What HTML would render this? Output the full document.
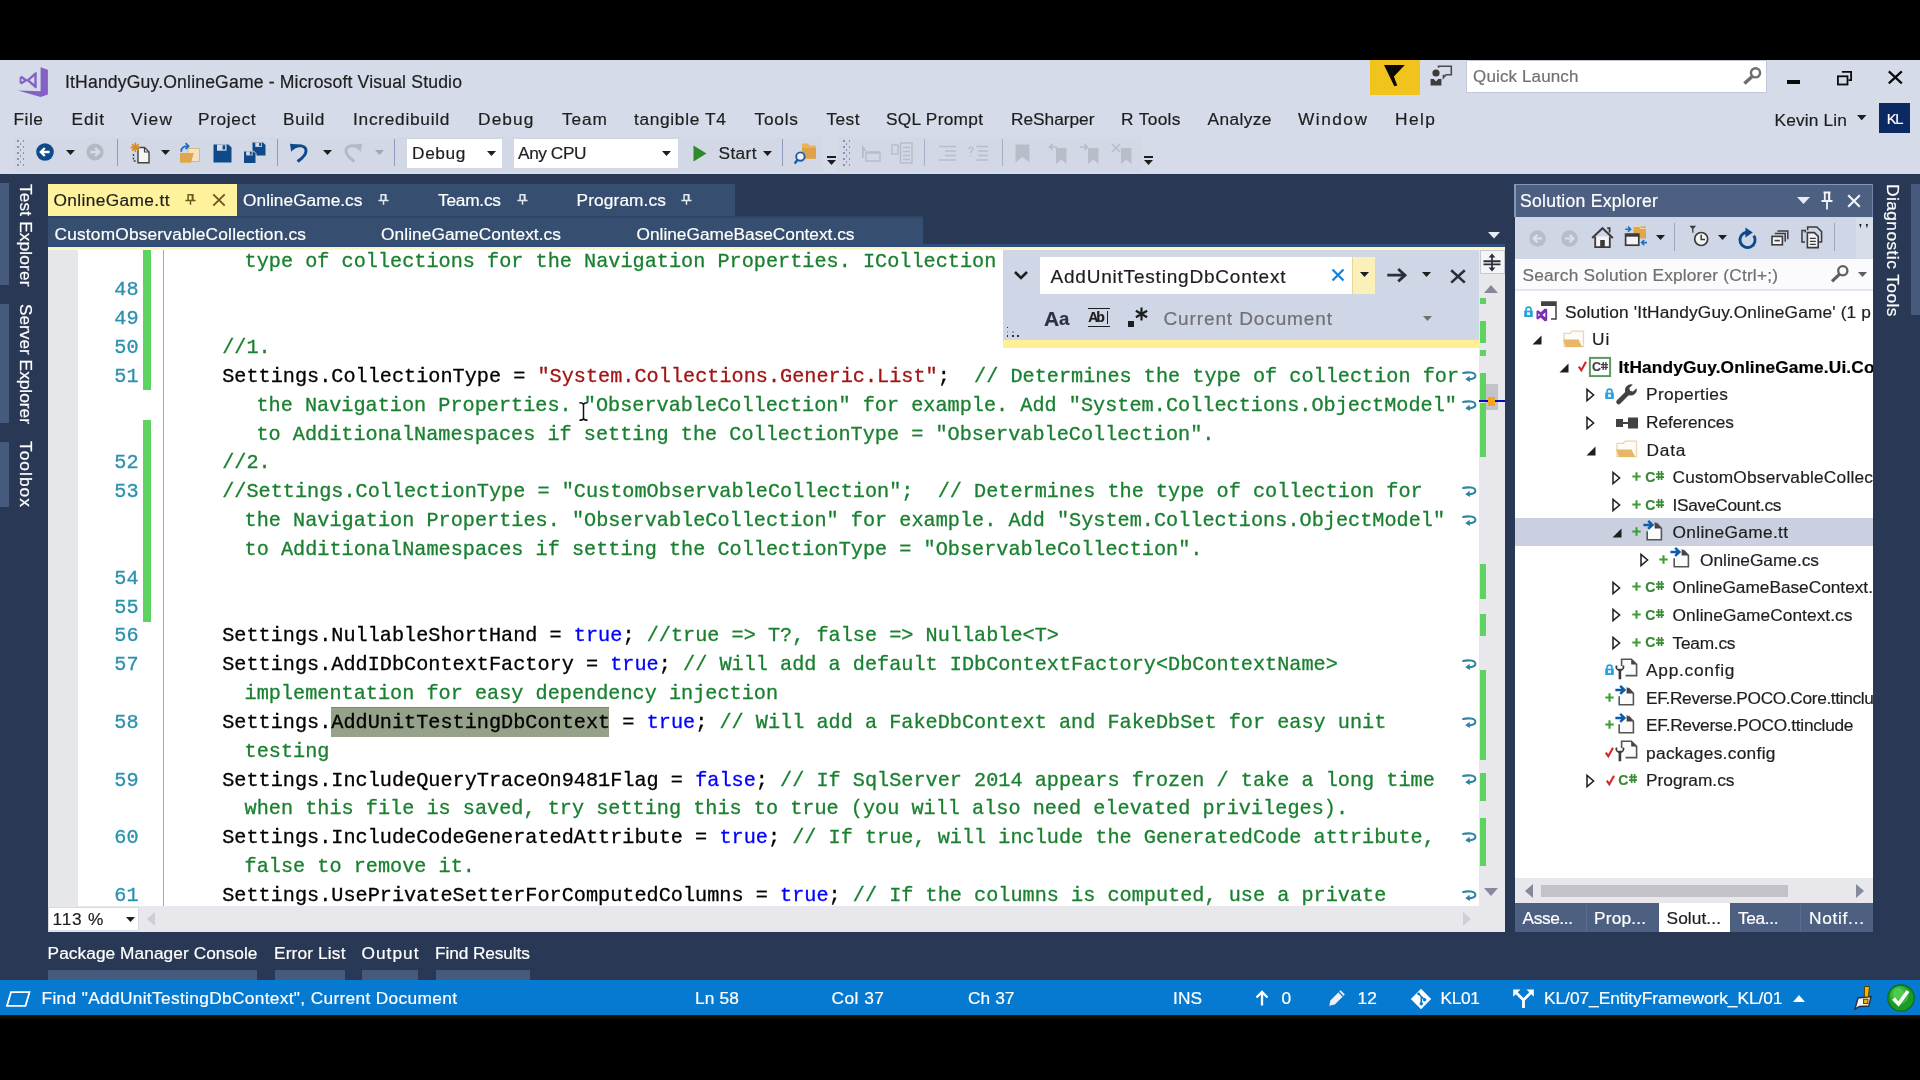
<!DOCTYPE html>
<html><head><meta charset="utf-8"><title>ItHandyGuy.OnlineGame - Microsoft Visual Studio</title>
<style>
html,body{margin:0;padding:0;width:1920px;height:1080px;overflow:hidden;background:#000;}
#root{position:relative;width:1920px;height:1080px;overflow:hidden;background:#000;}
#root div,#root span,#root svg{position:absolute;}
#root svg{overflow:visible;}
.fs{font-family:"Liberation Sans", sans-serif;white-space:pre;-webkit-text-stroke:0.2px;}
.fm{font-family:"Liberation Mono", monospace;white-space:pre;}
.cl{font-family:"Liberation Mono", monospace;font-size:20.2px;line-height:28.83px;height:28.83px;white-space:pre;letter-spacing:0.012px;-webkit-text-stroke:0.3px;}#root{filter:blur(0.45px);}
</style></head><body><div id="root">
<div style="left:0px;top:60px;width:1920px;height:955px;background:#293955;"></div>
<div style="left:0px;top:60px;width:1920px;height:114px;background:#d6dbe9;"></div>
<span class="fs" style="left:65.03px;top:71.5px;font-size:17.6px;line-height:21px;color:#1e1e1e;letter-spacing:0.161px;">ItHandyGuy.OnlineGame - Microsoft Visual Studio</span>
<span class="fs" style="left:13.55px;top:108.7px;font-size:17.3px;line-height:21px;color:#1e1e1e;letter-spacing:0.514px;">File</span>
<span class="fs" style="left:71.55px;top:108.7px;font-size:17.3px;line-height:21px;color:#1e1e1e;letter-spacing:0.873px;">Edit</span>
<span class="fs" style="left:131.05px;top:108.7px;font-size:17.3px;line-height:21px;color:#1e1e1e;letter-spacing:1.248px;">View</span>
<span class="fs" style="left:198.05px;top:108.7px;font-size:17.3px;line-height:21px;color:#1e1e1e;letter-spacing:0.601px;">Project</span>
<span class="fs" style="left:283.05px;top:108.7px;font-size:17.3px;line-height:21px;color:#1e1e1e;letter-spacing:0.741px;">Build</span>
<span class="fs" style="left:353.05px;top:108.7px;font-size:17.3px;line-height:21px;color:#1e1e1e;letter-spacing:0.728px;">Incredibuild</span>
<span class="fs" style="left:478.05px;top:108.7px;font-size:17.3px;line-height:21px;color:#1e1e1e;letter-spacing:1.116px;">Debug</span>
<span class="fs" style="left:562.05px;top:108.7px;font-size:17.3px;line-height:21px;color:#1e1e1e;letter-spacing:0.879px;">Team</span>
<span class="fs" style="left:634.05px;top:108.7px;font-size:17.3px;line-height:21px;color:#1e1e1e;letter-spacing:0.67px;">tangible T4</span>
<span class="fs" style="left:754.55px;top:108.7px;font-size:17.3px;line-height:21px;color:#1e1e1e;letter-spacing:0.764px;">Tools</span>
<span class="fs" style="left:826.55px;top:108.7px;font-size:17.3px;line-height:21px;color:#1e1e1e;letter-spacing:0.399px;">Test</span>
<span class="fs" style="left:886.05px;top:108.7px;font-size:17.3px;line-height:21px;color:#1e1e1e;letter-spacing:0.272px;">SQL Prompt</span>
<span class="fs" style="left:1011.05px;top:108.7px;font-size:17.3px;line-height:21px;color:#1e1e1e;letter-spacing:-0.022px;">ReSharper</span>
<span class="fs" style="left:1121.05px;top:108.7px;font-size:17.3px;line-height:21px;color:#1e1e1e;letter-spacing:0.348px;">R Tools</span>
<span class="fs" style="left:1207.55px;top:108.7px;font-size:17.3px;line-height:21px;color:#1e1e1e;letter-spacing:0.403px;">Analyze</span>
<span class="fs" style="left:1298.05px;top:108.7px;font-size:17.3px;line-height:21px;color:#1e1e1e;letter-spacing:1.487px;">Window</span>
<span class="fs" style="left:1395.05px;top:108.7px;font-size:17.3px;line-height:21px;color:#1e1e1e;letter-spacing:1.452px;">Help</span>
<span class="fs" style="left:1774.55px;top:110.0px;font-size:17.3px;line-height:21px;color:#1e1e1e;letter-spacing:0.163px;">Kevin Lin</span>
<div style="left:1879px;top:103px;width:30.5px;height:30px;background:#0b2a62;"></div>
<span class="fs" style="left:1886.69px;top:109.6px;font-size:14.8px;line-height:18px;color:#ffffff;letter-spacing:-1.185px;">KL</span>
<div style="left:1369.5px;top:60px;width:50px;height:34.5px;background:#f0c31d;"></div>
<div style="left:1467px;top:60.5px;width:298.5px;height:31px;background:#ffffff;box-shadow:0 0 0 1px #c3c9d9;"></div>
<span class="fs" style="left:1473.07px;top:66.5px;font-size:17px;line-height:20px;color:#717171;letter-spacing:0.128px;">Quick Launch</span>
<div style="left:14px;top:137px;width:809px;height:34px;background:#d3d8e7;"></div>
<div style="left:837px;top:137px;width:304px;height:34px;background:#d3d8e7;"></div>
<div style="left:406.5px;top:138.5px;width:95px;height:29.5px;background:#ffffff;"></div>
<span class="fs" style="left:412.05px;top:142.5px;font-size:17.3px;line-height:21px;color:#1e1e1e;letter-spacing:0.616px;">Debug</span>
<div style="left:513.5px;top:138.5px;width:164px;height:29.5px;background:#ffffff;"></div>
<span class="fs" style="left:518.05px;top:142.5px;font-size:17.3px;line-height:21px;color:#1e1e1e;letter-spacing:-0.446px;">Any CPU</span>
<span class="fs" style="left:718.55px;top:142.5px;font-size:17.3px;line-height:21px;color:#1e1e1e;letter-spacing:0.35px;">Start</span>
<div style="left:0px;top:183px;width:9px;height:102px;background:#465a7d;"></div>
<div style="left:0px;top:304px;width:9px;height:119px;background:#465a7d;"></div>
<div style="left:0px;top:441.5px;width:9px;height:65.0px;background:#465a7d;"></div>
<div style="left:48px;top:216px;width:875px;height:1.5px;background:#2f4363;"></div>
<div style="left:236px;top:184px;width:498.5px;height:32px;background:#364e6f;"></div>
<div style="left:48px;top:217.5px;width:875px;height:29.5px;background:#364e6f;"></div>
<div style="left:48px;top:184px;width:188.5px;height:32px;background:#fff29d;"></div>
<span class="fs" style="left:53.55px;top:189.5px;font-size:17.3px;line-height:21px;color:#1e1e1e;letter-spacing:0.373px;">OnlineGame.tt</span>
<span class="fs" style="left:243.05px;top:189.5px;font-size:17.3px;line-height:21px;color:#ffffff;letter-spacing:0.024px;">OnlineGame.cs</span>
<span class="fs" style="left:438.05px;top:189.5px;font-size:17.3px;line-height:21px;color:#ffffff;letter-spacing:-0.24px;">Team.cs</span>
<span class="fs" style="left:576.55px;top:189.5px;font-size:17.3px;line-height:21px;color:#ffffff;letter-spacing:0.116px;">Program.cs</span>
<span class="fs" style="left:54.55px;top:223.5px;font-size:17.3px;line-height:21px;color:#ffffff;letter-spacing:0.197px;">CustomObservableCollection.cs</span>
<span class="fs" style="left:381.05px;top:223.5px;font-size:17.3px;line-height:21px;color:#ffffff;letter-spacing:0.066px;">OnlineGameContext.cs</span>
<span class="fs" style="left:636.55px;top:223.5px;font-size:17.3px;line-height:21px;color:#ffffff;letter-spacing:-0.006px;">OnlineGameBaseContext.cs</span>
<div style="left:48px;top:247px;width:1457px;height:685px;background:#ffffff;"></div>
<div style="left:48px;top:243.6px;width:1457px;height:3px;background:#2f4d7f;"></div>
<div style="left:48px;top:246.5px;width:1457px;height:3.4px;background:#fff3a5;background:linear-gradient(#fff1a0,#fff6bd 60%,#fffbe0);"></div>
<div style="left:48px;top:249.8px;width:29.5px;height:656.2px;background:#e6e7e8;"></div>
<div style="left:163px;top:249.8px;width:1px;height:656.2px;background:#a9a9a9;"></div>
<div style="left:143px;top:249.8px;width:8px;height:140.7px;background:#5fd35f;"></div>
<div style="left:143px;top:420px;width:8px;height:201.5px;background:#5fd35f;"></div>
<div style="left:331.2px;top:707.2px;width:278.3px;height:29.4px;background:#95a189;box-shadow:inset 0 1px 0 #7d8874;"></div>
<div style="left:48px;top:248px;width:1431px;height:658px;overflow:hidden">
<div class="cl" style="left:196.5px;top:-0.41px"><span style="position:static;color:#1a8030">type of collections for the Navigation Properties. ICollection</span></div>
<div class="cl" style="left:174.2px;top:86.07px"><span style="position:static;color:#1a8030">//1.</span></div>
<div class="cl" style="left:174.2px;top:114.90px"><span style="position:static;color:#000000">Settings.CollectionType = </span><span style="position:static;color:#a31515">"System.Collections.Generic.List"</span><span style="position:static;color:#000000">;  </span><span style="position:static;color:#1a8030">// Determines the type of collection for</span></div>
<div class="cl" style="left:208.39999999999998px;top:143.73px"><span style="position:static;color:#1a8030">the Navigation Properties. "ObservableCollection" for example. Add "System.Collections.ObjectModel"</span></div>
<div class="cl" style="left:208.39999999999998px;top:172.56px"><span style="position:static;color:#1a8030">to AdditionalNamespaces if setting the CollectionType = "ObservableCollection".</span></div>
<div class="cl" style="left:174.2px;top:201.39px"><span style="position:static;color:#1a8030">//2.</span></div>
<div class="cl" style="left:174.2px;top:230.22px"><span style="position:static;color:#1a8030">//Settings.CollectionType = "CustomObservableCollection";  // Determines the type of collection for</span></div>
<div class="cl" style="left:196.5px;top:259.06px"><span style="position:static;color:#1a8030">the Navigation Properties. "ObservableCollection" for example. Add "System.Collections.ObjectModel"</span></div>
<div class="cl" style="left:196.5px;top:287.88px"><span style="position:static;color:#1a8030">to AdditionalNamespaces if setting the CollectionType = "ObservableCollection".</span></div>
<div class="cl" style="left:174.2px;top:374.38px"><span style="position:static;color:#000000">Settings.NullableShortHand = </span><span style="position:static;color:#0000ff">true</span><span style="position:static;color:#000000">; </span><span style="position:static;color:#1a8030">//true =&gt; T?, false =&gt; Nullable&lt;T&gt;</span></div>
<div class="cl" style="left:174.2px;top:403.21px"><span style="position:static;color:#000000">Settings.AddIDbContextFactory = </span><span style="position:static;color:#0000ff">true</span><span style="position:static;color:#000000">; </span><span style="position:static;color:#1a8030">// Will add a default IDbContextFactory&lt;DbContextName&gt;</span></div>
<div class="cl" style="left:196.5px;top:432.04px"><span style="position:static;color:#1a8030">implementation for easy dependency injection</span></div>
<div class="cl" style="left:174.2px;top:460.87px"><span style="position:static;color:#000000">Settings.AddUnitTestingDbContext = </span><span style="position:static;color:#0000ff">true</span><span style="position:static;color:#000000">; </span><span style="position:static;color:#1a8030">// Will add a FakeDbContext and FakeDbSet for easy unit</span></div>
<div class="cl" style="left:196.5px;top:489.69px"><span style="position:static;color:#1a8030">testing</span></div>
<div class="cl" style="left:174.2px;top:518.52px"><span style="position:static;color:#000000">Settings.IncludeQueryTraceOn9481Flag = </span><span style="position:static;color:#0000ff">false</span><span style="position:static;color:#000000">; </span><span style="position:static;color:#1a8030">// If SqlServer 2014 appears frozen / take a long time</span></div>
<div class="cl" style="left:196.5px;top:547.36px"><span style="position:static;color:#1a8030">when this file is saved, try setting this to true (you will also need elevated privileges).</span></div>
<div class="cl" style="left:174.2px;top:576.18px"><span style="position:static;color:#000000">Settings.IncludeCodeGeneratedAttribute = </span><span style="position:static;color:#0000ff">true</span><span style="position:static;color:#000000">; </span><span style="position:static;color:#1a8030">// If true, will include the GeneratedCode attribute,</span></div>
<div class="cl" style="left:196.5px;top:605.01px"><span style="position:static;color:#1a8030">false to remove it.</span></div>
<div class="cl" style="left:174.2px;top:633.85px"><span style="position:static;color:#000000">Settings.UsePrivateSetterForComputedColumns = </span><span style="position:static;color:#0000ff">true</span><span style="position:static;color:#000000">; </span><span style="position:static;color:#1a8030">// If the columns is computed, use a private</span></div>
<div class="cl" style="left:66.3px;top:28.41px;color:#2b91af">48</div>
<div class="cl" style="left:66.3px;top:57.24px;color:#2b91af">49</div>
<div class="cl" style="left:66.3px;top:86.07px;color:#2b91af">50</div>
<div class="cl" style="left:66.3px;top:114.90px;color:#2b91af">51</div>
<div class="cl" style="left:66.3px;top:201.39px;color:#2b91af">52</div>
<div class="cl" style="left:66.3px;top:230.22px;color:#2b91af">53</div>
<div class="cl" style="left:66.3px;top:316.72px;color:#2b91af">54</div>
<div class="cl" style="left:66.3px;top:345.55px;color:#2b91af">55</div>
<div class="cl" style="left:66.3px;top:374.38px;color:#2b91af">56</div>
<div class="cl" style="left:66.3px;top:403.21px;color:#2b91af">57</div>
<div class="cl" style="left:66.3px;top:460.87px;color:#2b91af">58</div>
<div class="cl" style="left:66.3px;top:518.52px;color:#2b91af">59</div>
<div class="cl" style="left:66.3px;top:576.18px;color:#2b91af">60</div>
<div class="cl" style="left:66.3px;top:633.85px;color:#2b91af">61</div>
</div>
<div style="left:1479px;top:249.8px;width:26px;height:656.2px;background:#e8e8ec;"></div>
<div style="left:48px;top:906px;width:1457px;height:26px;background:#e8e8ec;"></div>
<div style="left:1479.5px;top:249.5px;width:25px;height:24.2px;background:#f5f5f7;box-shadow:inset 0 0 0 1px #c6c8d2;"></div>
<svg style="left:1482px;top:252px;" width="20" height="21" viewBox="0 0 20 21"><path d="M10 3v15" stroke="#2b2f3c" stroke-width="1.7"/><path d="M6.6 5.6L10 1.6l3.4 4zM6.6 15.4L10 19.4l3.4-4z" fill="#2b2f3c"/><path d="M1.5 9.2h17M1.5 12.4h17" stroke="#2b2f3c" stroke-width="1.9"/></svg>
<svg style="left:1484px;top:284.5px;" width="14" height="8" viewBox="0 0 14 8"><path d="M0 8L7 0l7 8z" fill="#868999"/></svg>
<svg style="left:1484px;top:888px;" width="14" height="8" viewBox="0 0 14 8"><path d="M0 0h14L7 8z" fill="#868999"/></svg>
<svg style="left:147px;top:912px;" width="8" height="14" viewBox="0 0 8 14"><path d="M8 0v14L0 7z" fill="#cdced6"/></svg>
<svg style="left:1463px;top:912px;" width="8" height="14" viewBox="0 0 8 14"><path d="M0 0v14L8 7z" fill="#cdced6"/></svg>
<div style="left:1485px;top:384px;width:12.5px;height:26px;background:#c2c3c9;"></div>
<div style="left:1480px;top:298px;width:5.8px;height:5.600000000000023px;background:#5fd35f;"></div>
<div style="left:1480px;top:321px;width:5.8px;height:22.30000000000001px;background:#5fd35f;"></div>
<div style="left:1480px;top:350.3px;width:5.8px;height:5.5px;background:#5fd35f;"></div>
<div style="left:1480px;top:372.5px;width:5.8px;height:27.0px;background:#5fd35f;"></div>
<div style="left:1480px;top:403px;width:5.8px;height:53.5px;background:#5fd35f;"></div>
<div style="left:1480px;top:564px;width:5.8px;height:35.299999999999955px;background:#5fd35f;"></div>
<div style="left:1480px;top:614px;width:5.8px;height:22.299999999999955px;background:#5fd35f;"></div>
<div style="left:1480px;top:670.4px;width:5.8px;height:90.0px;background:#5fd35f;"></div>
<div style="left:1480px;top:772.6px;width:5.8px;height:28.399999999999977px;background:#5fd35f;"></div>
<div style="left:1480px;top:817.8px;width:5.8px;height:48.200000000000045px;background:#5fd35f;"></div>
<div style="left:1479px;top:400px;width:26px;height:2.2px;background:#0a0ab4;"></div>
<div style="left:1488px;top:396.7px;width:7px;height:9px;background:#f6a420;"></div>
<div style="left:48px;top:906.5px;width:90.5px;height:24.5px;background:#ffffff;box-shadow:inset 0 0 0 1px #d9dbe3;"></div>
<span class="fs" style="left:52.55px;top:908.5px;font-size:17.3px;line-height:21px;color:#1e1e1e;letter-spacing:0.796px;">113 %</span>
<svg style="left:126px;top:916.5px;" width="9" height="5" viewBox="0 0 9 5"><path d="M0 0h9L4.5 5z" fill="#1e1e1e"/></svg>
<svg style="left:1461.6px;top:370.71999999999997px;" width="16" height="14" viewBox="0 0 16 14"><g transform="scale(0.93)"><path d="M1.2 2.2C6 0.9 14.3 1.2 14.4 5.2 14.5 8.2 10 9 6.8 9.2" fill="none" stroke="#2f84a3" stroke-width="2.2" stroke-linecap="round"/><path d="M8.2 5.2L3.4 8.9l5.2 3z" fill="#2f84a3"/></g></svg>
<svg style="left:1461.6px;top:399.54999999999995px;" width="16" height="14" viewBox="0 0 16 14"><g transform="scale(0.93)"><path d="M1.2 2.2C6 0.9 14.3 1.2 14.4 5.2 14.5 8.2 10 9 6.8 9.2" fill="none" stroke="#2f84a3" stroke-width="2.2" stroke-linecap="round"/><path d="M8.2 5.2L3.4 8.9l5.2 3z" fill="#2f84a3"/></g></svg>
<svg style="left:1461.6px;top:486.03999999999996px;" width="16" height="14" viewBox="0 0 16 14"><g transform="scale(0.93)"><path d="M1.2 2.2C6 0.9 14.3 1.2 14.4 5.2 14.5 8.2 10 9 6.8 9.2" fill="none" stroke="#2f84a3" stroke-width="2.2" stroke-linecap="round"/><path d="M8.2 5.2L3.4 8.9l5.2 3z" fill="#2f84a3"/></g></svg>
<svg style="left:1461.6px;top:514.87px;" width="16" height="14" viewBox="0 0 16 14"><g transform="scale(0.93)"><path d="M1.2 2.2C6 0.9 14.3 1.2 14.4 5.2 14.5 8.2 10 9 6.8 9.2" fill="none" stroke="#2f84a3" stroke-width="2.2" stroke-linecap="round"/><path d="M8.2 5.2L3.4 8.9l5.2 3z" fill="#2f84a3"/></g></svg>
<svg style="left:1461.6px;top:659.02px;" width="16" height="14" viewBox="0 0 16 14"><g transform="scale(0.93)"><path d="M1.2 2.2C6 0.9 14.3 1.2 14.4 5.2 14.5 8.2 10 9 6.8 9.2" fill="none" stroke="#2f84a3" stroke-width="2.2" stroke-linecap="round"/><path d="M8.2 5.2L3.4 8.9l5.2 3z" fill="#2f84a3"/></g></svg>
<svg style="left:1461.6px;top:716.68px;" width="16" height="14" viewBox="0 0 16 14"><g transform="scale(0.93)"><path d="M1.2 2.2C6 0.9 14.3 1.2 14.4 5.2 14.5 8.2 10 9 6.8 9.2" fill="none" stroke="#2f84a3" stroke-width="2.2" stroke-linecap="round"/><path d="M8.2 5.2L3.4 8.9l5.2 3z" fill="#2f84a3"/></g></svg>
<svg style="left:1461.6px;top:774.3399999999999px;" width="16" height="14" viewBox="0 0 16 14"><g transform="scale(0.93)"><path d="M1.2 2.2C6 0.9 14.3 1.2 14.4 5.2 14.5 8.2 10 9 6.8 9.2" fill="none" stroke="#2f84a3" stroke-width="2.2" stroke-linecap="round"/><path d="M8.2 5.2L3.4 8.9l5.2 3z" fill="#2f84a3"/></g></svg>
<svg style="left:1461.6px;top:831.9999999999999px;" width="16" height="14" viewBox="0 0 16 14"><g transform="scale(0.93)"><path d="M1.2 2.2C6 0.9 14.3 1.2 14.4 5.2 14.5 8.2 10 9 6.8 9.2" fill="none" stroke="#2f84a3" stroke-width="2.2" stroke-linecap="round"/><path d="M8.2 5.2L3.4 8.9l5.2 3z" fill="#2f84a3"/></g></svg>
<svg style="left:1461.6px;top:889.66px;" width="16" height="14" viewBox="0 0 16 14"><g transform="scale(0.93)"><path d="M1.2 2.2C6 0.9 14.3 1.2 14.4 5.2 14.5 8.2 10 9 6.8 9.2" fill="none" stroke="#2f84a3" stroke-width="2.2" stroke-linecap="round"/><path d="M8.2 5.2L3.4 8.9l5.2 3z" fill="#2f84a3"/></g></svg>
<div style="left:1003.2px;top:249.8px;width:475.8px;height:90.4px;background:#cfd6e5;"></div>
<div style="left:1003.2px;top:340.1px;width:475.8px;height:7.9px;background:#fff096;"></div>
<div style="left:1040px;top:256.8px;width:312.4px;height:37.4px;background:#ffffff;"></div>
<div style="left:1352.4px;top:256.8px;width:22.8px;height:37.4px;background:#fcf0ba;box-shadow:inset 1px 0 0 #e9d596;"></div>
<span class="fs" style="left:1050.45px;top:264.5px;font-size:19px;line-height:23px;color:#1e1e1e;letter-spacing:0.796px;">AddUnitTestingDbContext</span>
<span class="fs" style="left:1163.45px;top:307.0px;font-size:19px;line-height:23px;color:#717171;letter-spacing:0.891px;">Current Document</span>
<span class="fs" style="left:1044.05px;top:305.8px;font-size:21px;line-height:25px;color:#2d3142;letter-spacing:1.133px;font-weight:700;">A</span>
<span class="fs" style="left:1058.98px;top:308.2px;font-size:18.5px;line-height:22px;color:#2d3142;letter-spacing:1.741px;font-weight:700;">a</span>
<svg style="left:1013px;top:269px;" width="16" height="12" viewBox="0 0 16 12"><path d="M2 3l6 6 6-6" fill="none" stroke="#1e1e1e" stroke-width="2.6"/></svg>
<svg style="left:1331px;top:268px;" width="14" height="14" viewBox="0 0 14 14"><path d="M1.5 1.5l11 11M12.5 1.5l-11 11" stroke="#1883d7" stroke-width="2.3"/></svg>
<svg style="left:1359.5px;top:271.5px;" width="9" height="5" viewBox="0 0 9 5"><path d="M0 0h9L4.5 5z" fill="#1e1e1e"/></svg>
<svg style="left:1386px;top:265.5px;" width="22" height="18" viewBox="0 0 22 18"><path d="M1.3 9.2h17M12.2 3l6.8 6.2-6.8 6.2" fill="none" stroke="#2b2f3c" stroke-width="2.8"/></svg>
<svg style="left:1421.5px;top:271.5px;" width="9" height="5" viewBox="0 0 9 5"><path d="M0 0h9L4.5 5z" fill="#1e1e1e"/></svg>
<svg style="left:1450px;top:269px;" width="16" height="15" viewBox="0 0 16 15"><path d="M1.2 1.2l13.6 12.4M14.8 1.2L1.2 13.6" stroke="#2b2f3c" stroke-width="2.6"/></svg>
<svg style="left:1422.5px;top:316px;" width="9" height="5" viewBox="0 0 9 5"><path d="M0 0h9L4.5 5z" fill="#717171"/></svg>
<div style="left:1088px;top:307.5px;width:21.5px;height:1.6px;background:#1e1e1e;"></div>
<div style="left:1088px;top:325.5px;width:21.5px;height:1.6px;background:#1e1e1e;"></div>
<span class="fs" style="left:1088.23px;top:309.0px;font-size:14px;line-height:17px;color:#1e1e1e;letter-spacing:-2.132px;font-weight:700;">Ab</span>
<div style="left:1106.5px;top:311px;width:1.6px;height:12.5px;background:#1e1e1e;"></div>
<div style="left:1128px;top:321px;width:6px;height:6px;background:#1e1e1e;"></div>
<svg style="left:1135px;top:307px;" width="13" height="14" viewBox="0 0 13 14"><path d="M6.5 0.5v13M0.9 3.7l11.2 6.6M12.1 3.7L0.9 10.3" stroke="#1e1e1e" stroke-width="2.2"/></svg>
<div style="left:1006.6px;top:326.5px;width:1.9px;height:1.9px;background:#2a2e50;"></div>
<div style="left:1006.6px;top:330.90000000000003px;width:1.9px;height:1.9px;background:#9aa0bb;"></div>
<div style="left:1011.7px;top:330.90000000000003px;width:1.9px;height:1.9px;background:#9aa0bb;"></div>
<div style="left:1006.6px;top:335.40000000000003px;width:1.9px;height:1.9px;background:#2a2e50;"></div>
<div style="left:1011.7px;top:335.40000000000003px;width:1.9px;height:1.9px;background:#2a2e50;"></div>
<div style="left:1016.9px;top:335.40000000000003px;width:1.9px;height:1.9px;background:#2a2e50;"></div>
<span class="fs" style="left:47.55px;top:943.0px;font-size:17.3px;line-height:21px;color:#ffffff;letter-spacing:0.065px;">Package Manager Console</span>
<div style="left:48.0px;top:969.5px;width:209.0px;height:10px;background:#465a7d;"></div>
<span class="fs" style="left:274.05px;top:943.0px;font-size:17.3px;line-height:21px;color:#ffffff;letter-spacing:0.144px;">Error List</span>
<div style="left:274.5px;top:969.5px;width:70.5px;height:10px;background:#465a7d;"></div>
<span class="fs" style="left:361.55px;top:943.0px;font-size:17.3px;line-height:21px;color:#ffffff;letter-spacing:1.002px;">Output</span>
<div style="left:362.0px;top:969.5px;width:56.0px;height:10px;background:#465a7d;"></div>
<span class="fs" style="left:435.05px;top:943.0px;font-size:17.3px;line-height:21px;color:#ffffff;letter-spacing:-0.104px;">Find Results</span>
<div style="left:435.5px;top:969.5px;width:94px;height:10px;background:#465a7d;"></div>
<div style="left:0px;top:979.5px;width:1920px;height:35.5px;background:#057ad0;"></div>
<div style="left:0px;top:1014.8px;width:1920px;height:5px;background:#1a1108;background:linear-gradient(#1d1409,#120c05 60%,#000);"></div>
<span class="fs" style="left:41.55px;top:987.8px;font-size:17.3px;line-height:21px;color:#ffffff;letter-spacing:0.341px;">Find &quot;AddUnitTestingDbContext&quot;, Current Document</span>
<span class="fs" style="left:695.05px;top:987.8px;font-size:17.3px;line-height:21px;color:#ffffff;letter-spacing:0.163px;">Ln 58</span>
<span class="fs" style="left:831.55px;top:987.8px;font-size:17.3px;line-height:21px;color:#ffffff;letter-spacing:0.487px;">Col 37</span>
<span class="fs" style="left:968.05px;top:987.8px;font-size:17.3px;line-height:21px;color:#ffffff;letter-spacing:0.069px;">Ch 37</span>
<span class="fs" style="left:1173.05px;top:987.8px;font-size:17.3px;line-height:21px;color:#ffffff;letter-spacing:0.044px;">INS</span>
<span class="fs" style="left:1281.55px;top:987.8px;font-size:17.3px;line-height:21px;color:#ffffff;letter-spacing:2.276px;">0</span>
<span class="fs" style="left:1357.55px;top:987.8px;font-size:17.3px;line-height:21px;color:#ffffff;letter-spacing:0.167px;">12</span>
<span class="fs" style="left:1440.55px;top:987.8px;font-size:17.3px;line-height:21px;color:#ffffff;letter-spacing:-0.325px;">KL01</span>
<span class="fs" style="left:1544.05px;top:987.8px;font-size:17.3px;line-height:21px;color:#ffffff;letter-spacing:-0.03px;">KL/07_EntityFramework_KL/01</span>
<svg style="left:6px;top:990.5px;" width="25" height="16" viewBox="0 0 25 16"><path d="M5 1.2h18.5l-4 13.6H1z" fill="none" stroke="#ffffff" stroke-width="1.8"/></svg>
<svg style="left:1255px;top:990px;" width="14" height="16" viewBox="0 0 14 16"><path d="M7 15.5V2M1.5 7.5L7 2l5.5 5.5" fill="none" stroke="#ffffff" stroke-width="2.3"/></svg>
<svg style="left:1327.5px;top:988px;" width="19" height="19" viewBox="0 0 19 19"><path d="M1.2 17.8l1.4-5.6L12.6 2.2l4.2 4.2-10 10z" fill="#eef2f6"/><path d="M10.8 4l4.2 4.2" stroke="#057ad0" stroke-width="1.3"/></svg>
<svg style="left:1409.5px;top:987.5px;" width="22" height="22" viewBox="0 0 22 22"><path d="M11 0.8L21.2 11 11 21.2 0.8 11z" fill="#ffffff"/><path d="M8.3 5.5l6 6M11.3 8.5v7.2" stroke="#057ad0" stroke-width="1.6" fill="none"/><circle cx="11.3" cy="15.8" r="1.7" fill="#057ad0"/><circle cx="14.6" cy="11.8" r="1.7" fill="#057ad0"/><circle cx="8.6" cy="5.8" r="1.4" fill="#057ad0"/></svg>
<svg style="left:1512px;top:988px;" width="23" height="21" viewBox="0 0 23 21"><path d="M11.5 20V12L4 4.5M11.5 12L19 4.5" fill="none" stroke="#ffffff" stroke-width="2.8"/><path d="M1.2 1.5h7.3L1.2 8.8zM21.8 1.5h-7.3l7.3 7.3z" fill="#ffffff"/></svg>
<svg style="left:1792.5px;top:994.5px;" width="12" height="7" viewBox="0 0 12 7"><path d="M0 7L6 0l6 7z" fill="#ffffff"/></svg>
<svg style="left:1852px;top:985px;" width="22" height="26" viewBox="0 0 22 26"><path d="M3 24l3-11 13-1.5-2.2 9.5-9.3 0.5z" fill="#f4f4f4" stroke="#26313f" stroke-width="1.4"/><path d="M12.5 1.5h5l-1.2 10.5h-4z" fill="#f5b400" stroke="#5a3c00" stroke-width="1"/><rect x="11.6" y="14.2" width="4.3" height="4.3" fill="#f5b400" stroke="#5a3c00" stroke-width="1"/></svg>
<svg style="left:1887px;top:984px;" width="28" height="28" viewBox="0 0 28 28"><circle cx="14" cy="14" r="13.2" fill="#1c9a26" stroke="#0b6b12" stroke-width="1.2"/><circle cx="12.4" cy="11.2" r="9.2" fill="#3fc043" opacity="0.75"/><circle cx="11.4" cy="9.6" r="5.6" fill="#62d85f" opacity="0.6"/><path d="M6.5 14.5l5 5.5 9.5-13" fill="none" stroke="#ffffff" stroke-width="3.6"/></svg>
<span class="fs" style="left:35.7px;top:183.55px;font-size:17.3px;line-height:21px;color:#ffffff;transform-origin:0 0;transform:rotate(90deg);letter-spacing:0.13px;">Test Explorer</span>
<span class="fs" style="left:35.7px;top:304.05px;font-size:17.3px;line-height:21px;color:#ffffff;transform-origin:0 0;transform:rotate(90deg);letter-spacing:-0.012px;">Server Explorer</span>
<span class="fs" style="left:35.7px;top:441.05px;font-size:17.3px;line-height:21px;color:#ffffff;transform-origin:0 0;transform:rotate(90deg);letter-spacing:1.054px;">Toolbox</span>
<div style="left:1515px;top:184px;width:358px;height:748px;background:#ffffff;"></div>
<div style="left:1515px;top:184px;width:358px;height:33px;background:#4d6082;box-shadow:inset 0 1px 0 #5d7092;"></div>
<span class="fs" style="left:1520.03px;top:190.5px;font-size:17.6px;line-height:21px;color:#ffffff;letter-spacing:0.247px;">Solution Explorer</span>
<svg style="left:1797px;top:197px;" width="13" height="7" viewBox="0 0 13 7"><path d="M0 0h13L6.5 7z" fill="#e8ecf5"/></svg>
<svg style="left:1821px;top:190.5px;" width="12" height="19" viewBox="0 0 12 19"><path d="M2.5 1.5h7M3.8 1.5v8M8.2 1.5v8M0.5 10h11M6 10v8.5" fill="none" stroke="#f2f4fa" stroke-width="1.8"/><path d="M7.3 1.5h1.8v8H7.3z" fill="#f2f4fa"/></svg>
<svg style="left:1847px;top:193.5px;" width="14" height="14" viewBox="0 0 14 14"><path d="M1.2 1.2l11.6 11.6M12.8 1.2L1.2 12.8" stroke="#f2f4fa" stroke-width="2.1"/></svg>
<div style="left:1515px;top:217px;width:358px;height:42px;background:#cfd6e5;"></div>
<div style="left:1515px;top:259px;width:358px;height:30px;background:#fbfbfd;"></div>
<div style="left:1515px;top:288.5px;width:358px;height:2.5px;background:#e4e7f0;"></div>
<span class="fs" style="left:1522.55px;top:265.0px;font-size:17.3px;line-height:21px;color:#6f6f6f;letter-spacing:0.192px;">Search Solution Explorer (Ctrl+;)</span>
<div style="left:1515px;top:517.5px;width:358px;height:28.5px;background:#cbd0e1;"></div>
<div style="left:1515px;top:291px;width:358px;height:587px;overflow:hidden">
<span class="fs" style="left:50.05px;top:10.8px;font-size:17.3px;line-height:21px;color:#1e1e1e;letter-spacing:0.158px;">Solution &#x27;ItHandyGuy.OnlineGame&#x27; (1 p</span>
<span class="fs" style="left:77.05px;top:38.36px;font-size:17.3px;line-height:21px;color:#1e1e1e;letter-spacing:1.073px;">Ui</span>
<span class="fs" style="left:103.55px;top:65.92px;font-size:17.3px;line-height:21px;color:#000000;letter-spacing:0.142px;font-weight:700;">ItHandyGuy.OnlineGame.Ui.Co</span>
<span class="fs" style="left:131.05px;top:93.48px;font-size:17.3px;line-height:21px;color:#1e1e1e;letter-spacing:0.348px;">Properties</span>
<span class="fs" style="left:131.05px;top:121.04px;font-size:17.3px;line-height:21px;color:#1e1e1e;letter-spacing:-0.053px;">References</span>
<span class="fs" style="left:131.55px;top:148.6px;font-size:17.3px;line-height:21px;color:#1e1e1e;letter-spacing:0.795px;">Data</span>
<span class="fs" style="left:157.55px;top:176.16px;font-size:17.3px;line-height:21px;color:#1e1e1e;letter-spacing:0.213px;">CustomObservableCollec</span>
<span class="fs" style="left:157.55px;top:203.72px;font-size:17.3px;line-height:21px;color:#1e1e1e;letter-spacing:-0.291px;">ISaveCount.cs</span>
<span class="fs" style="left:157.55px;top:231.28px;font-size:17.3px;line-height:21px;color:#1e1e1e;letter-spacing:0.332px;">OnlineGame.tt</span>
<span class="fs" style="left:185.05px;top:258.84px;font-size:17.3px;line-height:21px;color:#1e1e1e;letter-spacing:-0.017px;">OnlineGame.cs</span>
<span class="fs" style="left:157.55px;top:286.4px;font-size:17.3px;line-height:21px;color:#1e1e1e;letter-spacing:-0.017px;">OnlineGameBaseContext.</span>
<span class="fs" style="left:157.55px;top:313.96px;font-size:17.3px;line-height:21px;color:#1e1e1e;letter-spacing:0.066px;">OnlineGameContext.cs</span>
<span class="fs" style="left:157.55px;top:341.52px;font-size:17.3px;line-height:21px;color:#1e1e1e;letter-spacing:-0.24px;">Team.cs</span>
<span class="fs" style="left:131.05px;top:369.08px;font-size:17.3px;line-height:21px;color:#1e1e1e;letter-spacing:0.748px;">App.config</span>
<span class="fs" style="left:131.05px;top:396.64px;font-size:17.3px;line-height:21px;color:#1e1e1e;letter-spacing:-0.345px;">EF.Reverse.POCO.Core.ttinclu</span>
<span class="fs" style="left:131.05px;top:424.2px;font-size:17.3px;line-height:21px;color:#1e1e1e;letter-spacing:-0.283px;">EF.Reverse.POCO.ttinclude</span>
<span class="fs" style="left:131.05px;top:451.76px;font-size:17.3px;line-height:21px;color:#1e1e1e;letter-spacing:0.321px;">packages.config</span>
<span class="fs" style="left:131.05px;top:479.32px;font-size:17.3px;line-height:21px;color:#1e1e1e;letter-spacing:0.005px;">Program.cs</span>
</div>
<div style="left:1515px;top:878.2px;width:358px;height:25.2px;background:#e8e8ec;"></div>
<div style="left:1541px;top:884.5px;width:247px;height:12.5px;background:#c2c3c9;"></div>
<svg style="left:1525px;top:884px;" width="8" height="14" viewBox="0 0 8 14"><path d="M8 0v14L0 7z" fill="#868999"/></svg>
<svg style="left:1856px;top:884px;" width="8" height="14" viewBox="0 0 8 14"><path d="M0 0v14L8 7z" fill="#868999"/></svg>
<div style="left:1515px;top:903.2px;width:358px;height:28.8px;background:#4d6082;"></div>
<div style="left:1659px;top:903.2px;width:70.5px;height:28.8px;background:#ffffff;"></div>
<div style="left:1586px;top:905px;width:1px;height:26px;background:#5b6e90;"></div>
<div style="left:1800px;top:905px;width:1px;height:26px;background:#5b6e90;"></div>
<span class="fs" style="left:1522.55px;top:908.3px;font-size:17.3px;line-height:21px;color:#ffffff;letter-spacing:-0.404px;">Asse...</span>
<span class="fs" style="left:1594.05px;top:908.3px;font-size:17.3px;line-height:21px;color:#ffffff;letter-spacing:0.163px;">Prop...</span>
<span class="fs" style="left:1666.55px;top:907.5px;font-size:17.3px;line-height:21px;color:#1e1e1e;letter-spacing:0.086px;">Solut...</span>
<span class="fs" style="left:1738.05px;top:908.3px;font-size:17.3px;line-height:21px;color:#ffffff;letter-spacing:-0.373px;">Tea...</span>
<span class="fs" style="left:1809.05px;top:908.3px;font-size:17.3px;line-height:21px;color:#ffffff;letter-spacing:0.709px;">Notif...</span>
<div style="left:1911px;top:183.5px;width:9px;height:131.5px;background:#465a7d;"></div>
<span class="fs" style="left:1903.0px;top:184.05px;font-size:17.3px;line-height:21px;color:#ffffff;transform-origin:0 0;transform:rotate(90deg);letter-spacing:0.458px;">Diagnostic Tools</span>
<svg style="left:1524px;top:305.5px;" width="9" height="12" viewBox="0 0 9 12"><path d="M2 5V3.6a2.5 2.5 0 0 1 5 0V5" fill="none" stroke="#2aa2dd" stroke-width="1.6"/><rect x="0.2" y="4.6" width="8.6" height="6.4" fill="#2aa2dd"/><rect x="3" y="6.3" width="3" height="2.8" fill="#e8f6fd"/></svg>
<svg style="left:1535px;top:301.3px;" width="22" height="22" viewBox="0 0 22 22"><path d="M6 1h15v17h-5" fill="none" stroke="#424242" stroke-width="1.5"/><path d="M6 1h15v4H6z" fill="#424242"/><path d="M12.2 8.2v11.4l-2.3 0.8-4.2-3.9-2.6 2-1.6-0.8v-7.6l1.6-0.8 2.6 2 4.2-3.9zM3.3 12.2v3.4l1.7-1.7zM7.4 13.9l2.9 2.3v-4.6z" fill="#7b2fb5" fill-rule="evenodd"/></svg>
<svg style="left:1531.5px;top:335.36px;" width="10" height="10" viewBox="0 0 10 10"><path d="M9.5 0.5v9h-9z" fill="#1e1e1e"/></svg>
<svg style="left:1563px;top:330.16px;" width="22" height="18" viewBox="0 0 22 18"><path d="M1 3.4h6.4l1.6-2.2h11.5v15.4H1z" fill="#fdfcf8" stroke="#ead8ad" stroke-width="1.3"/><path d="M0.3 9.6h15.2l3.8 7.3H2.7z" fill="#e7b766"/></svg>
<svg style="left:1559px;top:362.92px;" width="10" height="10" viewBox="0 0 10 10"><path d="M9.5 0.5v9h-9z" fill="#1e1e1e"/></svg>
<svg style="left:1578.3px;top:361.42px;" width="9" height="11" viewBox="0 0 9 11"><path d="M0.8 5.6l2.5 3.6L8 0.8" fill="none" stroke="#d42626" stroke-width="2.1"/></svg>
<svg style="left:1589px;top:357.42px;" width="22" height="20" viewBox="0 0 22 20"><rect x="0.9" y="0.9" width="20.2" height="18.2" fill="#ffffff" stroke="#5c9a60" stroke-width="2"/></svg>
<span class="fs" style="left:1592.11px;top:359.62px;font-size:12.5px;line-height:15px;color:#424242;letter-spacing:-0.454px;font-weight:700;">C</span>
<svg style="left:1601px;top:362.42px;" width="7" height="8" viewBox="0 0 7 8"><path d="M2.2 0v8M4.9 0v8M0 2.6h7M0 5.4h7" stroke="#424242" stroke-width="1.4"/></svg>
<svg style="left:1585.8px;top:387.98px;" width="9" height="14" viewBox="0 0 9 14"><path d="M1 1.4v11.2l6.6-5.6z" fill="#ffffff" stroke="#1e1e1e" stroke-width="1.5" stroke-linejoin="miter"/></svg>
<svg style="left:1605px;top:388.18px;" width="9" height="12" viewBox="0 0 9 12"><path d="M2 5V3.6a2.5 2.5 0 0 1 5 0V5" fill="none" stroke="#2aa2dd" stroke-width="1.6"/><rect x="0.2" y="4.6" width="8.6" height="6.4" fill="#2aa2dd"/><rect x="3" y="6.3" width="3" height="2.8" fill="#e8f6fd"/></svg>
<svg style="left:1616px;top:384.48px;" width="22" height="21" viewBox="0 0 22 21"><path d="M20.6 4.2l-3.6 3.4-3-0.8-0.7-2.9L16.8 0.6a6 6 0 0 0-7.6 7.3L0.9 16.2a2.4 2.4 0 0 0 3.6 3.4l8.2-8.4a6 6 0 0 0 7.9-7z" fill="#424242"/></svg>
<svg style="left:1585.8px;top:415.54px;" width="9" height="14" viewBox="0 0 9 14"><path d="M1 1.4v11.2l6.6-5.6z" fill="#ffffff" stroke="#1e1e1e" stroke-width="1.5" stroke-linejoin="miter"/></svg>
<svg style="left:1616px;top:416.54px;" width="22" height="12" viewBox="0 0 22 12"><rect x="0" y="2" width="7" height="8" fill="#424242"/><rect x="7" y="5" width="6" height="2" fill="#424242"/><rect x="12" y="0.5" width="10" height="11" fill="#424242"/></svg>
<svg style="left:1586px;top:445.6px;" width="10" height="10" viewBox="0 0 10 10"><path d="M9.5 0.5v9h-9z" fill="#1e1e1e"/></svg>
<svg style="left:1616.3px;top:440.40000000000003px;" width="22" height="18" viewBox="0 0 22 18"><path d="M1 3.4h6.4l1.6-2.2h11.5v15.4H1z" fill="#fdfcf8" stroke="#ead8ad" stroke-width="1.3"/><path d="M0.3 9.6h15.2l3.8 7.3H2.7z" fill="#e7b766"/></svg>
<svg style="left:1612.3px;top:470.65999999999997px;" width="9" height="14" viewBox="0 0 9 14"><path d="M1 1.4v11.2l6.6-5.6z" fill="#ffffff" stroke="#1e1e1e" stroke-width="1.5" stroke-linejoin="miter"/></svg>
<svg style="left:1632px;top:472.15999999999997px;" width="9" height="9" viewBox="0 0 9 9"><path d="M4.5 0.3v8.4M0.3 4.5h8.4" stroke="#3f9e35" stroke-width="2.1"/></svg>
<span class="fs" style="left:1645.23px;top:468.96px;font-size:14px;line-height:17px;color:#388a34;letter-spacing:0.415px;font-weight:700;">C</span>
<svg style="left:1655.8px;top:471.15999999999997px;" width="8" height="9" viewBox="0 0 8 9"><path d="M2.6 0v9M5.6 0v9M0 3h8M0 6.2h8" stroke="#388a34" stroke-width="1.7"/></svg>
<svg style="left:1612.3px;top:498.22px;" width="9" height="14" viewBox="0 0 9 14"><path d="M1 1.4v11.2l6.6-5.6z" fill="#ffffff" stroke="#1e1e1e" stroke-width="1.5" stroke-linejoin="miter"/></svg>
<svg style="left:1632px;top:499.72px;" width="9" height="9" viewBox="0 0 9 9"><path d="M4.5 0.3v8.4M0.3 4.5h8.4" stroke="#3f9e35" stroke-width="2.1"/></svg>
<span class="fs" style="left:1645.23px;top:496.52px;font-size:14px;line-height:17px;color:#388a34;letter-spacing:0.415px;font-weight:700;">C</span>
<svg style="left:1655.8px;top:498.72px;" width="8" height="9" viewBox="0 0 8 9"><path d="M2.6 0v9M5.6 0v9M0 3h8M0 6.2h8" stroke="#388a34" stroke-width="1.7"/></svg>
<svg style="left:1612.3px;top:580.9px;" width="9" height="14" viewBox="0 0 9 14"><path d="M1 1.4v11.2l6.6-5.6z" fill="#ffffff" stroke="#1e1e1e" stroke-width="1.5" stroke-linejoin="miter"/></svg>
<svg style="left:1632px;top:582.4px;" width="9" height="9" viewBox="0 0 9 9"><path d="M4.5 0.3v8.4M0.3 4.5h8.4" stroke="#3f9e35" stroke-width="2.1"/></svg>
<span class="fs" style="left:1645.23px;top:579.2px;font-size:14px;line-height:17px;color:#388a34;letter-spacing:0.415px;font-weight:700;">C</span>
<svg style="left:1655.8px;top:581.4px;" width="8" height="9" viewBox="0 0 8 9"><path d="M2.6 0v9M5.6 0v9M0 3h8M0 6.2h8" stroke="#388a34" stroke-width="1.7"/></svg>
<svg style="left:1612.3px;top:608.46px;" width="9" height="14" viewBox="0 0 9 14"><path d="M1 1.4v11.2l6.6-5.6z" fill="#ffffff" stroke="#1e1e1e" stroke-width="1.5" stroke-linejoin="miter"/></svg>
<svg style="left:1632px;top:609.96px;" width="9" height="9" viewBox="0 0 9 9"><path d="M4.5 0.3v8.4M0.3 4.5h8.4" stroke="#3f9e35" stroke-width="2.1"/></svg>
<span class="fs" style="left:1645.23px;top:606.76px;font-size:14px;line-height:17px;color:#388a34;letter-spacing:0.415px;font-weight:700;">C</span>
<svg style="left:1655.8px;top:608.96px;" width="8" height="9" viewBox="0 0 8 9"><path d="M2.6 0v9M5.6 0v9M0 3h8M0 6.2h8" stroke="#388a34" stroke-width="1.7"/></svg>
<svg style="left:1612.3px;top:636.02px;" width="9" height="14" viewBox="0 0 9 14"><path d="M1 1.4v11.2l6.6-5.6z" fill="#ffffff" stroke="#1e1e1e" stroke-width="1.5" stroke-linejoin="miter"/></svg>
<svg style="left:1632px;top:637.52px;" width="9" height="9" viewBox="0 0 9 9"><path d="M4.5 0.3v8.4M0.3 4.5h8.4" stroke="#3f9e35" stroke-width="2.1"/></svg>
<span class="fs" style="left:1645.23px;top:634.32px;font-size:14px;line-height:17px;color:#388a34;letter-spacing:0.415px;font-weight:700;">C</span>
<svg style="left:1655.8px;top:636.52px;" width="8" height="9" viewBox="0 0 8 9"><path d="M2.6 0v9M5.6 0v9M0 3h8M0 6.2h8" stroke="#388a34" stroke-width="1.7"/></svg>
<svg style="left:1612.3px;top:528.28px;" width="10" height="10" viewBox="0 0 10 10"><path d="M9.5 0.5v9h-9z" fill="#1e1e1e"/></svg>
<svg style="left:1632px;top:527.28px;" width="9" height="9" viewBox="0 0 9 9"><path d="M4.5 0.3v8.4M0.3 4.5h8.4" stroke="#3f9e35" stroke-width="2.1"/></svg>
<svg style="left:1643px;top:519.78px;" width="20" height="22" viewBox="0 0 20 22"><path d="M4.2 11.2v8.6h14.2V8.2l-5-5.2" fill="#fbfbfb" stroke="#555555" stroke-width="1.6"/><path d="M11.6 1.8l6.8 6.8h-6.8z" fill="#444444"/><path d="M0.4 4.9h8M5.2 0.9l4.2 4-4.2 4" fill="none" stroke="#0b5cad" stroke-width="2.5"/></svg>
<svg style="left:1639.5px;top:553.34px;" width="9" height="14" viewBox="0 0 9 14"><path d="M1 1.4v11.2l6.6-5.6z" fill="#ffffff" stroke="#1e1e1e" stroke-width="1.5" stroke-linejoin="miter"/></svg>
<svg style="left:1659px;top:554.84px;" width="9" height="9" viewBox="0 0 9 9"><path d="M4.5 0.3v8.4M0.3 4.5h8.4" stroke="#3f9e35" stroke-width="2.1"/></svg>
<svg style="left:1670px;top:547.34px;" width="20" height="22" viewBox="0 0 20 22"><path d="M4.2 11.2v8.6h14.2V8.2l-5-5.2" fill="#fbfbfb" stroke="#555555" stroke-width="1.6"/><path d="M11.6 1.8l6.8 6.8h-6.8z" fill="#444444"/><path d="M0.4 4.9h8M5.2 0.9l4.2 4-4.2 4" fill="none" stroke="#0b5cad" stroke-width="2.5"/></svg>
<svg style="left:1605px;top:663.78px;" width="9" height="12" viewBox="0 0 9 12"><path d="M2 5V3.6a2.5 2.5 0 0 1 5 0V5" fill="none" stroke="#2aa2dd" stroke-width="1.6"/><rect x="0.2" y="4.6" width="8.6" height="6.4" fill="#2aa2dd"/><rect x="3" y="6.3" width="3" height="2.8" fill="#e8f6fd"/></svg>
<svg style="left:1615.4px;top:657.5799999999999px;" width="23" height="22" viewBox="0 0 23 22"><path d="M6.6 8V1.2h9.8l5.2 5.2v11.2H10.5" fill="#fbfbfb" stroke="#555555" stroke-width="1.6"/><path d="M16.2 1.2l5.4 5.4h-5.4z" fill="#444444"/><path d="M0.6 7.6a4.4 4.4 0 0 0 3 5.3v8.4h2.6v-8.4a4.4 4.4 0 0 0 3-5.3H7.5v3.1H2.3V7.6z" fill="#3a3a3a"/></svg>
<svg style="left:1604.8px;top:692.64px;" width="9" height="9" viewBox="0 0 9 9"><path d="M4.5 0.3v8.4M0.3 4.5h8.4" stroke="#3f9e35" stroke-width="2.1"/></svg>
<svg style="left:1615.2px;top:685.14px;" width="20" height="22" viewBox="0 0 20 22"><path d="M4.2 11.2v8.6h14.2V8.2l-5-5.2" fill="#fbfbfb" stroke="#555555" stroke-width="1.6"/><path d="M11.6 1.8l6.8 6.8h-6.8z" fill="#444444"/><path d="M0.4 4.9h8M5.2 0.9l4.2 4-4.2 4" fill="none" stroke="#0b5cad" stroke-width="2.5"/></svg>
<svg style="left:1604.8px;top:720.2px;" width="9" height="9" viewBox="0 0 9 9"><path d="M4.5 0.3v8.4M0.3 4.5h8.4" stroke="#3f9e35" stroke-width="2.1"/></svg>
<svg style="left:1615.2px;top:712.7px;" width="20" height="22" viewBox="0 0 20 22"><path d="M4.2 11.2v8.6h14.2V8.2l-5-5.2" fill="#fbfbfb" stroke="#555555" stroke-width="1.6"/><path d="M11.6 1.8l6.8 6.8h-6.8z" fill="#444444"/><path d="M0.4 4.9h8M5.2 0.9l4.2 4-4.2 4" fill="none" stroke="#0b5cad" stroke-width="2.5"/></svg>
<svg style="left:1605.3px;top:747.26px;" width="9" height="11" viewBox="0 0 9 11"><path d="M0.8 5.6l2.5 3.6L8 0.8" fill="none" stroke="#d42626" stroke-width="2.1"/></svg>
<svg style="left:1615.4px;top:740.26px;" width="23" height="22" viewBox="0 0 23 22"><path d="M6.6 8V1.2h9.8l5.2 5.2v11.2H10.5" fill="#fbfbfb" stroke="#555555" stroke-width="1.6"/><path d="M16.2 1.2l5.4 5.4h-5.4z" fill="#444444"/><path d="M0.6 7.6a4.4 4.4 0 0 0 3 5.3v8.4h2.6v-8.4a4.4 4.4 0 0 0 3-5.3H7.5v3.1H2.3V7.6z" fill="#3a3a3a"/></svg>
<svg style="left:1585.8px;top:773.8199999999999px;" width="9" height="14" viewBox="0 0 9 14"><path d="M1 1.4v11.2l6.6-5.6z" fill="#ffffff" stroke="#1e1e1e" stroke-width="1.5" stroke-linejoin="miter"/></svg>
<svg style="left:1605.5px;top:774.8199999999999px;" width="9" height="11" viewBox="0 0 9 11"><path d="M0.8 5.6l2.5 3.6L8 0.8" fill="none" stroke="#d42626" stroke-width="2.1"/></svg>
<span class="fs" style="left:1618.23px;top:772.12px;font-size:14px;line-height:17px;color:#388a34;letter-spacing:0.415px;font-weight:700;">C</span>
<svg style="left:1628.8px;top:774.3199999999999px;" width="8" height="9" viewBox="0 0 8 9"><path d="M2.6 0v9M5.6 0v9M0 3h8M0 6.2h8" stroke="#388a34" stroke-width="1.7"/></svg>
<div style="left:17px;top:140px;width:1.7px;height:1.7px;background:#8a93a8;"></div>
<div style="left:22.5px;top:140px;width:1.7px;height:1.7px;background:#8a93a8;"></div>
<div style="left:19.8px;top:143.05px;width:1.7px;height:1.7px;background:#8a93a8;"></div>
<div style="left:17px;top:146.10000000000002px;width:1.7px;height:1.7px;background:#8a93a8;"></div>
<div style="left:22.5px;top:146.10000000000002px;width:1.7px;height:1.7px;background:#8a93a8;"></div>
<div style="left:19.8px;top:149.15000000000003px;width:1.7px;height:1.7px;background:#8a93a8;"></div>
<div style="left:17px;top:152.20000000000005px;width:1.7px;height:1.7px;background:#8a93a8;"></div>
<div style="left:22.5px;top:152.20000000000005px;width:1.7px;height:1.7px;background:#8a93a8;"></div>
<div style="left:19.8px;top:155.25000000000006px;width:1.7px;height:1.7px;background:#8a93a8;"></div>
<div style="left:17px;top:158.30000000000007px;width:1.7px;height:1.7px;background:#8a93a8;"></div>
<div style="left:22.5px;top:158.30000000000007px;width:1.7px;height:1.7px;background:#8a93a8;"></div>
<div style="left:19.8px;top:161.35000000000008px;width:1.7px;height:1.7px;background:#8a93a8;"></div>
<div style="left:17px;top:164.4000000000001px;width:1.7px;height:1.7px;background:#8a93a8;"></div>
<div style="left:22.5px;top:164.4000000000001px;width:1.7px;height:1.7px;background:#8a93a8;"></div>
<svg style="left:36px;top:143px;" width="18" height="18" viewBox="0 0 18 18"><circle cx="9" cy="9" r="8.8" fill="#0e4a8a"/><path d="M13.6 9H5.2M8.8 5L4.8 9l4 4" fill="none" stroke="#ffffff" stroke-width="2.3"/></svg>
<svg style="left:65.9px;top:150.28px;" width="9" height="5.0" viewBox="0 0 9 5.0"><path d="M0 0h9L4.5 5.0z" fill="#1e1e1e"/></svg>
<svg style="left:85.5px;top:143px;" width="18" height="18" viewBox="0 0 18 18"><circle cx="9" cy="9" r="8.6" fill="#b5b9c6"/><path d="M4.4 9h8.4M9.2 5l4 4-4 4" fill="none" stroke="#d9dde8" stroke-width="2.3"/></svg>
<div style="left:116.8px;top:139px;width:1px;height:27px;background:#8e9bbc;"></div>
<svg style="left:129.5px;top:142px;" width="21" height="22" viewBox="0 0 21 22"><path d="M8 5.5h6.5l4.5 4.5v10.8H8z" fill="#f6f6f6" stroke="#424242" stroke-width="1.4"/><path d="M14.5 5.5V10H19" fill="none" stroke="#424242" stroke-width="1.2"/><path d="M3.5 12v7h4" fill="none" stroke="#424242" stroke-width="1.4" stroke-dasharray="2 1.6"/><path d="M5.3 0.6v9.4M0.6 5.3h9.4M2 2l6.6 6.6M8.6 2L2 8.6" stroke="#e08a16" stroke-width="1.7"/></svg>
<svg style="left:160.7px;top:150.28px;" width="9" height="5.0" viewBox="0 0 9 5.0"><path d="M0 0h9L4.5 5.0z" fill="#1e1e1e"/></svg>
<svg style="left:179px;top:142px;" width="22" height="22" viewBox="0 0 22 22"><path d="M9 6.5h11.5v13H9z" fill="#f3e3c3" stroke="#dcb978" stroke-width="1"/><path d="M1 11h13.5l-2.6 9.5H1z" fill="#e0a64a"/><path d="M1 11v9.5h11l2.6-9.5" fill="#dfa64c"/><path d="M2.2 9.8C2 5.6 5.5 4 9.2 4.2M6.6 1.2l3 3-3 3" fill="none" stroke="#1a6fc4" stroke-width="1.8"/></svg>
<svg style="left:212.5px;top:143.5px;" width="19" height="19" viewBox="0 0 19 19"><path d="M0.5 0.5h15l3 3v15h-18z" fill="#0e4a8a"/><rect x="4" y="0.5" width="9.5" height="6.2" fill="#d6dbe9"/><rect x="9.6" y="1.3" width="2.6" height="4.2" fill="#0e4a8a"/></svg>
<svg style="left:243px;top:142px;" width="23" height="22" viewBox="0 0 23 22"><path d="M9.5 0.5h10.5l2.5 2.5v10.5h-13z" fill="#0e4a8a"/><rect x="12.3" y="0.5" width="6.6" height="4.4" fill="#d6dbe9"/><rect x="16.2" y="1" width="1.9" height="3" fill="#0e4a8a"/><path d="M0.5 9h10l2.5 2.5v10h-12.5z" fill="#0e4a8a" stroke="#d2d8e6" stroke-width="1"/><rect x="3.2" y="9.4" width="6.4" height="4" fill="#d6dbe9"/><rect x="6.8" y="9.8" width="1.9" height="2.8" fill="#0e4a8a"/></svg>
<div style="left:276.6px;top:139px;width:1px;height:27px;background:#8e9bbc;"></div>
<svg style="left:288.5px;top:141.5px;" width="20" height="21" viewBox="0 0 20 21"><path d="M3 6.6C9 1.5 17.2 3.6 17 9.2 16.8 13.8 12.4 16.6 8.6 19.6" fill="none" stroke="#0e4a8a" stroke-width="3"/><path d="M1 1.8l8.2 0.6-7 7.4z" fill="#0e4a8a"/></svg>
<svg style="left:322.9px;top:150.28px;" width="9" height="5.0" viewBox="0 0 9 5.0"><path d="M0 0h9L4.5 5.0z" fill="#1e1e1e"/></svg>
<svg style="left:342.5px;top:141.5px;" width="20" height="21" viewBox="0 0 20 21"><path d="M17 6.6C11 1.5 2.8 3.6 3 9.2 3.2 13.8 7.6 16.6 11.4 19.6" fill="none" stroke="#b5b9c6" stroke-width="3"/><path d="M19 1.8l-8.2 0.6 7 7.4z" fill="#b5b9c6"/></svg>
<svg style="left:375.3px;top:150.28px;" width="9" height="5.0" viewBox="0 0 9 5.0"><path d="M0 0h9L4.5 5.0z" fill="#a2a7b6"/></svg>
<div style="left:393.8px;top:139px;width:1px;height:27px;background:#8e9bbc;"></div>
<svg style="left:486.5px;top:150.67999999999998px;" width="9" height="5.0" viewBox="0 0 9 5.0"><path d="M0 0h9L4.5 5.0z" fill="#1e1e1e"/></svg>
<svg style="left:662.0px;top:150.67999999999998px;" width="9" height="5.0" viewBox="0 0 9 5.0"><path d="M0 0h9L4.5 5.0z" fill="#1e1e1e"/></svg>
<svg style="left:693px;top:144.5px;" width="14" height="17" viewBox="0 0 14 17"><path d="M0.5 0.5v16L13.5 8.5z" fill="#2f8a2c"/></svg>
<svg style="left:763.1px;top:150.67999999999998px;" width="9" height="5.0" viewBox="0 0 9 5.0"><path d="M0 0h9L4.5 5.0z" fill="#1e1e1e"/></svg>
<div style="left:781.5px;top:139px;width:1px;height:27px;background:#8e9bbc;"></div>
<svg style="left:793.5px;top:142px;" width="23" height="23" viewBox="0 0 23 23"><path d="M8 1.5h6l1.8 2.2H22v13H8z" fill="#e6b45a"/><path d="M8 6h14v10.7H8z" fill="#dda24a"/><circle cx="6.4" cy="14.6" r="4.2" fill="#eef2fa" stroke="#1a5ca8" stroke-width="1.9"/><path d="M3.4 17.8L0.8 21.6" stroke="#1a5ca8" stroke-width="2.4"/></svg>
<div style="left:827.0px;top:156.3px;width:9px;height:1.8px;background:#1e1e1e;"></div>
<svg style="left:827.0px;top:159.70000000000002px;" width="9" height="5" viewBox="0 0 9 5"><path d="M0 0h9L4.5 5z" fill="#1e1e1e"/></svg>
<div style="left:1144.0px;top:156.3px;width:9px;height:1.8px;background:#1e1e1e;"></div>
<svg style="left:1144.0px;top:159.70000000000002px;" width="9" height="5" viewBox="0 0 9 5"><path d="M0 0h9L4.5 5z" fill="#1e1e1e"/></svg>
<div style="left:843px;top:140px;width:1.7px;height:1.7px;background:#8a93a8;"></div>
<div style="left:848.5px;top:140px;width:1.7px;height:1.7px;background:#8a93a8;"></div>
<div style="left:845.8px;top:143.05px;width:1.7px;height:1.7px;background:#8a93a8;"></div>
<div style="left:843px;top:146.10000000000002px;width:1.7px;height:1.7px;background:#8a93a8;"></div>
<div style="left:848.5px;top:146.10000000000002px;width:1.7px;height:1.7px;background:#8a93a8;"></div>
<div style="left:845.8px;top:149.15000000000003px;width:1.7px;height:1.7px;background:#8a93a8;"></div>
<div style="left:843px;top:152.20000000000005px;width:1.7px;height:1.7px;background:#8a93a8;"></div>
<div style="left:848.5px;top:152.20000000000005px;width:1.7px;height:1.7px;background:#8a93a8;"></div>
<div style="left:845.8px;top:155.25000000000006px;width:1.7px;height:1.7px;background:#8a93a8;"></div>
<div style="left:843px;top:158.30000000000007px;width:1.7px;height:1.7px;background:#8a93a8;"></div>
<div style="left:848.5px;top:158.30000000000007px;width:1.7px;height:1.7px;background:#8a93a8;"></div>
<div style="left:845.8px;top:161.35000000000008px;width:1.7px;height:1.7px;background:#8a93a8;"></div>
<div style="left:843px;top:164.4000000000001px;width:1.7px;height:1.7px;background:#8a93a8;"></div>
<div style="left:848.5px;top:164.4000000000001px;width:1.7px;height:1.7px;background:#8a93a8;"></div>
<svg style="left:860px;top:143px;" width="22" height="20" viewBox="0 0 22 20"><path d="M2 1.5l4.5 6.5H3.8V15H2z" fill="#b9bdca"/><path d="M6 9.5h14v8.5H6z" fill="none" stroke="#b9bdca" stroke-width="1.5"/><path d="M6 9.5h14" stroke="#b9bdca" stroke-width="2.4"/></svg>
<svg style="left:891px;top:142px;" width="22" height="22" viewBox="0 0 22 22"><path d="M1 3h6v9H1z" fill="none" stroke="#b9bdca" stroke-width="1.4"/><path d="M9.5 1h11.5v20H9.5z" fill="none" stroke="#b9bdca" stroke-width="1.5"/><path d="M12 5.5h7M12 9.5h7M12 13.5h7M12 17.5h7" stroke="#b9bdca" stroke-width="1.5"/></svg>
<div style="left:924px;top:139px;width:1px;height:27px;background:#a6b0c8;"></div>
<svg style="left:938px;top:145px;" width="19" height="16" viewBox="0 0 19 16"><path d="M1 1.5h17M7 6h11M7 10.5h11M1 15h17" stroke="#b9bdca" stroke-width="1.6"/></svg>
<svg style="left:968px;top:145px;" width="21" height="16" viewBox="0 0 21 16"><path d="M8 1.5h12M10 6h10M10 10.5h10M8 15h12" stroke="#b9bdca" stroke-width="1.6"/><path d="M1 4.5C1 1.5 5 1.5 5 4c0 2-2.5 2-2.5 4M2.5 10.2v1.6" fill="none" stroke="#b9bdca" stroke-width="1.4"/></svg>
<div style="left:1001.5px;top:139px;width:1px;height:27px;background:#a6b0c8;"></div>
<svg style="left:1015px;top:143.5px;" width="15" height="19" viewBox="0 0 15 19"><path d="M0.5 0.5h14v18l-7-5.5-7 5.5z" fill="#b9bdca"/></svg>
<svg style="left:1047px;top:142.5px;" width="20" height="21" viewBox="0 0 20 21"><path d="M9 5h10.5v16l-5.2-4.4L9 21z" fill="#b9bdca"/><path d="M10 4H3M5.8 1L2.6 4l3.2 3" fill="none" stroke="#b9bdca" stroke-width="1.7"/></svg>
<svg style="left:1079px;top:142.5px;" width="20" height="21" viewBox="0 0 20 21"><path d="M9 5h10.5v16l-5.2-4.4L9 21z" fill="#b9bdca"/><path d="M1 4h7M5.2 1l3.2 3-3.2 3" fill="none" stroke="#b9bdca" stroke-width="1.7"/></svg>
<svg style="left:1110.5px;top:142.5px;" width="21" height="21" viewBox="0 0 21 21"><path d="M10 5h10.5v16l-5.2-4.4L10 21z" fill="#b9bdca"/><path d="M1 1l8 8M9 1L1 9" fill="none" stroke="#b9bdca" stroke-width="1.7"/></svg>
<svg style="left:16px;top:64px;" width="34" height="36" viewBox="0 0 34 36"><path d="M24.6 3.3L31.9 5.8V30.6L24.6 32.9 1.9 26.4 24.6 27.2z" fill="#8661c5"/><path d="M3.6 13.3L5.6 11.8 11 15.4 19.6 8l1.1 0.5v15.4l-1.1 0.5L11 17.1 5.6 20.6 3.6 19.1zM5.4 14.6v3.2l2.7-1.6zM13.6 16.2l4.7 3.9v-7.8z" fill="#8661c5" fill-rule="evenodd"/></svg>
<svg style="left:1380px;top:62px;" width="30" height="28" viewBox="0 0 30 28"><path d="M4 3.1h20.8L13.9 14.6l3.4 8.8-3 0.9z" fill="#0a0a0a"/></svg>
<svg style="left:1428px;top:63px;" width="26" height="25" viewBox="0 0 26 25"><circle cx="8" cy="10" r="3.6" fill="#3b3b3b"/><path d="M2.6 16h3.2l2.2 2.6 2.2-2.6h3.2v6.6H2.6z" fill="#3b3b3b"/><path d="M10.5 4.8V3.2h12.8v8.6H18l-2.6 2.8v-2.8" fill="none" stroke="#4a4a4a" stroke-width="1.6"/></svg>
<svg style="left:1741px;top:65px;" width="22" height="22" viewBox="0 0 22 22"><circle cx="14.5" cy="7.8" r="4.6" fill="none" stroke="#6d6d6d" stroke-width="2.4"/><path d="M11.2 11.4L3.4 18.4" stroke="#6d6d6d" stroke-width="3.4"/></svg>
<div style="left:1787px;top:80px;width:13.2px;height:3.9px;background:#0a0a0a;"></div>
<svg style="left:1836px;top:70px;" width="17" height="16" viewBox="0 0 17 16"><path d="M5.9 1.9h9.2v8.2h-2.6" fill="none" stroke="#0a0a0a" stroke-width="1.8"/><rect x="1.9" y="6.3" width="9.6" height="8.2" fill="#d6dbe9" stroke="#0a0a0a" stroke-width="1.8"/></svg>
<svg style="left:1887px;top:69.5px;" width="17" height="15" viewBox="0 0 17 15"><path d="M1.8 1.4l13 12M14.8 1.4l-13 12" stroke="#0a0a0a" stroke-width="2.2"/></svg>
<svg style="left:1857.2px;top:114.568px;" width="9.4" height="5.3" viewBox="0 0 9.4 5.3"><path d="M0 0h9.4L4.7 5.3z" fill="#1e1e1e"/></svg>
<svg style="left:184.5px;top:194px;" width="11" height="11" viewBox="0 0 11 11"><path d="M2.4 0.8h6.2M3.1 0.8v5.4M7.9 0.8v5.4M0.4 6.4h10.2M5.5 6.4v4.4" fill="none" stroke="#6b5a1e" stroke-width="1.5"/><path d="M6.6 0.8h1.3v5.4H6.6z" fill="#6b5a1e"/></svg>
<svg style="left:211.5px;top:193px;" width="14" height="14" viewBox="0 0 14 14"><path d="M1.3 1.3l11.4 11.4M12.7 1.3L1.3 12.7" stroke="#6b5a1e" stroke-width="1.9"/></svg>
<svg style="left:378px;top:194px;" width="11" height="11" viewBox="0 0 11 11"><path d="M2.4 0.8h6.2M3.1 0.8v5.4M7.9 0.8v5.4M0.4 6.4h10.2M5.5 6.4v4.4" fill="none" stroke="#e4e8f2" stroke-width="1.5"/><path d="M6.6 0.8h1.3v5.4H6.6z" fill="#e4e8f2"/></svg>
<svg style="left:517.3px;top:194px;" width="11" height="11" viewBox="0 0 11 11"><path d="M2.4 0.8h6.2M3.1 0.8v5.4M7.9 0.8v5.4M0.4 6.4h10.2M5.5 6.4v4.4" fill="none" stroke="#e4e8f2" stroke-width="1.5"/><path d="M6.6 0.8h1.3v5.4H6.6z" fill="#e4e8f2"/></svg>
<svg style="left:681.2px;top:194px;" width="11" height="11" viewBox="0 0 11 11"><path d="M2.4 0.8h6.2M3.1 0.8v5.4M7.9 0.8v5.4M0.4 6.4h10.2M5.5 6.4v4.4" fill="none" stroke="#e4e8f2" stroke-width="1.5"/><path d="M6.6 0.8h1.3v5.4H6.6z" fill="#e4e8f2"/></svg>
<svg style="left:1487.5px;top:231.5px;" width="12" height="6.5" viewBox="0 0 12 6.5"><path d="M0 0h12L6 6.5z" fill="#e8ecf5"/></svg>
<svg style="left:1528.5px;top:229.5px;" width="17" height="17" viewBox="0 0 17 17"><circle cx="8.5" cy="8.5" r="8.3" fill="#b9bdca"/><path d="M13 8.5H5M8.4 4.7L4.6 8.5l3.8 3.8" fill="none" stroke="#dde1ec" stroke-width="2.2"/></svg>
<svg style="left:1561px;top:229.5px;" width="17" height="17" viewBox="0 0 17 17"><circle cx="8.5" cy="8.5" r="8.3" fill="#b9bdca"/><path d="M4 8.5h8M8.6 4.7l3.8 3.8-3.8 3.8" fill="none" stroke="#dde1ec" stroke-width="2.2"/></svg>
<svg style="left:1590.5px;top:226px;" width="23" height="23" viewBox="0 0 23 23"><path d="M1.2 12L11.5 2.2 21.8 12" fill="none" stroke="#3b3b3b" stroke-width="2"/><path d="M4.2 10.5v10.7h14.6V10.5" fill="#f4f4f6" stroke="#3b3b3b" stroke-width="1.8"/><rect x="9.2" y="14" width="4.6" height="7.2" fill="#3b3b3b"/><path d="M16.2 2.2h2.4v4.4" fill="none" stroke="#3b3b3b" stroke-width="1.8"/></svg>
<svg style="left:1624px;top:225px;" width="24" height="22" viewBox="0 0 24 22"><rect x="9.5" y="1.5" width="12.5" height="12" fill="#e0a64a"/><path d="M9.5 1.5h6l1.4 2h5.1" fill="none" stroke="#f0d7a6" stroke-width="1.2"/><rect x="1.6" y="9.2" width="13.2" height="11" fill="#f4f4f6" stroke="#3b3b3b" stroke-width="1.7"/><path d="M1.6 10.2h13.2" stroke="#3b3b3b" stroke-width="3"/><path d="M1.2 4.2h5M4 1.6l2.6 2.6L4 6.8" fill="none" stroke="#1a6fc4" stroke-width="1.6"/><path d="M23 17.6h-5M20.2 15l-2.6 2.6 2.6 2.6" fill="none" stroke="#1a6fc4" stroke-width="1.6"/></svg>
<svg style="left:1655.8px;top:234.78px;" width="9" height="5.0" viewBox="0 0 9 5.0"><path d="M0 0h9L4.5 5.0z" fill="#1e1e1e"/></svg>
<div style="left:1674.3px;top:222.5px;width:1px;height:28.0px;background:#9aa6c2;"></div>
<svg style="left:1688.5px;top:225px;" width="21" height="22" viewBox="0 0 21 22"><circle cx="12.2" cy="14" r="6.5" fill="#f4f4f6" stroke="#3b3b3b" stroke-width="1.7"/><path d="M12.2 9.8v4.6h3.8" fill="none" stroke="#3b3b3b" stroke-width="1.5"/><path d="M0.4 0.8h6.8L3.8 4.6z" fill="#3b3b3b"/><path d="M3.8 3.5v4.2" stroke="#3b3b3b" stroke-width="1.3"/></svg>
<svg style="left:1718.3px;top:234.78px;" width="9" height="5.0" viewBox="0 0 9 5.0"><path d="M0 0h9L4.5 5.0z" fill="#1e1e1e"/></svg>
<svg style="left:1737px;top:226.5px;" width="21" height="23" viewBox="0 0 21 23"><path d="M16.8 8.6A7.6 7.6 0 1 1 9.2 5.4" fill="none" stroke="#0e4a8a" stroke-width="2.9"/><path d="M8.4 0.4l7.4 5-7.4 5z" fill="#0e4a8a"/></svg>
<svg style="left:1771px;top:229.5px;" width="18" height="16" viewBox="0 0 18 16"><path d="M6.4 1h10.4v8.2" fill="none" stroke="#3b3b3b" stroke-width="1.5"/><path d="M3.8 3.6h10.4v8.2" fill="none" stroke="#3b3b3b" stroke-width="1.5"/><rect x="1" y="6.4" width="10.4" height="8.4" fill="#f4f4f6" stroke="#3b3b3b" stroke-width="1.6"/><path d="M3.6 10.6h5.2" stroke="#3b3b3b" stroke-width="1.6"/></svg>
<svg style="left:1800.5px;top:226px;" width="23" height="23" viewBox="0 0 23 23"><path d="M6.6 4.2V1h9.2l4.8 4.6V16h-3" fill="none" stroke="#3b3b3b" stroke-width="1.5"/><path d="M4.2 6.5V4.4H1V16h3" fill="none" stroke="#3b3b3b" stroke-width="1.5"/><path d="M6.4 6.6h7l3.8 3.8V21.6H6.4z" fill="#f4f4f6" stroke="#3b3b3b" stroke-width="1.6"/><path d="M8.8 12.4h6M8.8 15.4h6M8.8 18.4h6" stroke="#3b3b3b" stroke-width="1.3"/></svg>
<div style="left:1833.6px;top:222.5px;width:1px;height:28.0px;background:#9aa6c2;"></div>
<div style="left:1855.5px;top:217.5px;width:17.5px;height:41px;background:#d8ddea;"></div>
<svg style="left:1859px;top:224px;" width="10" height="5" viewBox="0 0 10 5"><path d="M0.3 0h2.2L1.4 4.6zM6.8 0H9L7.9 4.6z" fill="#1e1e1e"/></svg>
<svg style="left:1829px;top:263px;" width="22" height="22" viewBox="0 0 22 22"><circle cx="13.8" cy="7.8" r="4.6" fill="none" stroke="#5e5e5e" stroke-width="2.3"/><path d="M10.6 11.2L3 18.4" stroke="#5e5e5e" stroke-width="3.2"/></svg>
<svg style="left:1857.5px;top:272.08000000000004px;" width="9" height="5.0" viewBox="0 0 9 5.0"><path d="M0 0h9L4.5 5.0z" fill="#5e5e5e"/></svg>
<svg style="left:579.4px;top:402px;" width="9" height="19" viewBox="0 0 9 19"><path d="M0.4 0.8C2.6 0.8 4 1.2 4.5 2.4 5 1.2 6.4 0.8 8.6 0.8M4.5 2.4v14.2M0.4 18.2c2.2 0 3.6-0.4 4.1-1.6 0.5 1.2 1.9 1.6 4.1 1.6" fill="none" stroke="#111111" stroke-width="1.5"/></svg>
<div style="left:1514.1px;top:183.6px;width:359.4px;height:1.6px;background:#8596bb;"></div>
<div style="left:1514.1px;top:183.6px;width:1.7px;height:33px;background:#8596bb;"></div>
<div style="left:1871.9px;top:183.6px;width:1.6px;height:33px;background:#7486ad;"></div>
</div></body></html>
